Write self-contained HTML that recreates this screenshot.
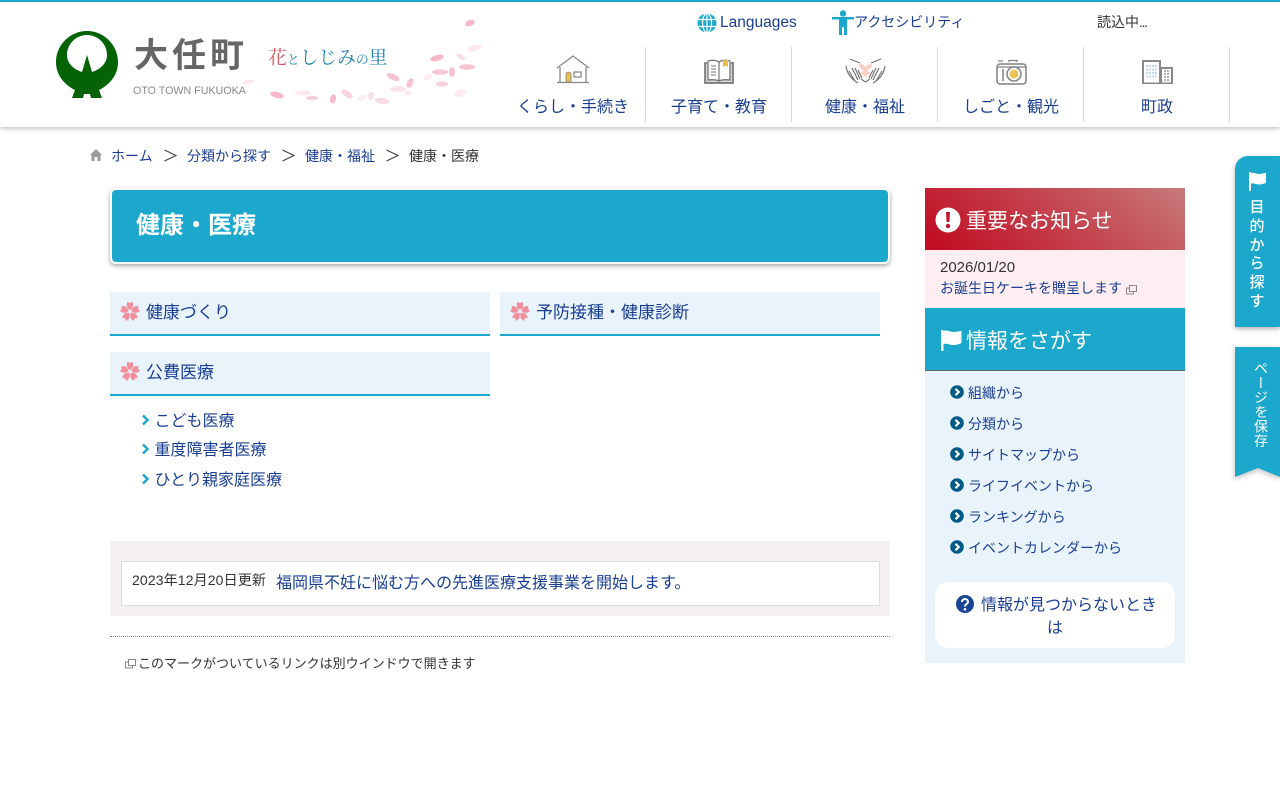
<!DOCTYPE html>
<html lang="ja"><head><meta charset="utf-8"><title>健康・医療</title>
<style>
html,body{margin:0;padding:0;background:#fff}
body{width:1280px;height:800px;overflow:hidden;position:relative;font-family:"Liberation Sans","Noto Sans CJK JP",sans-serif;color:#333;font-size:14px}
.a{position:absolute;white-space:nowrap;line-height:1}
.l{color:#1a3f92}
svg{position:absolute;display:block;overflow:visible}
.nav{color:#1a3f92;font-size:16px;width:146px;text-align:center;top:100px}
.sep{position:absolute;top:47px;width:1px;height:75px;background:#d8d8d8}
.h{position:absolute;background:#e8f3fc;border-bottom:2px solid #1ca8cd;height:42px;width:380px}
.h span{position:absolute;left:36px;top:11px;font-size:17px;line-height:20px;color:#1a3f92;white-space:nowrap}
.h svg{left:10px;top:9px}
.side{font-size:14px;color:#1a3f92;left:968px}
</style></head><body>
<svg width="0" height="0" style="position:absolute"><defs>
<path id="pt" d="M10 9C6.500 7 6 3.500 7.500 .8L10 2l2.500-1.200C14 3.500 13.500 7 10 9Z"/>
<g id="sakura" fill="#f0909c"><use href="#pt"/><use href="#pt" transform="rotate(72 10 10.500)"/><use href="#pt" transform="rotate(144 10 10.500)"/><use href="#pt" transform="rotate(216 10 10.500)"/><use href="#pt" transform="rotate(288 10 10.500)"/></g>
<g id="ext" fill="none" stroke="#888" stroke-width="1"><rect x="3.500" y=".5" width="7" height="6"/><path d="M3.500 3H.5v6h7V6.500"/></g>
<g id="bul"><circle cx="7" cy="7" r="6.800" fill="#005a87"/><path d="M5.500 3.800 8.700 7 5.500 10.200" fill="none" stroke="#fff" stroke-width="2.200"/></g>
</defs></svg>

<div style="position:absolute;left:0;top:0;width:1280px;height:127px;background:#fff;box-shadow:0 1px 5px rgba(0,0,0,.3)"></div>
<div style="position:absolute;left:0;top:0;width:1280px;height:2px;background:#1ca8cd"></div>

<!-- logo -->
<svg style="left:55px;top:30px" width="64" height="68" viewBox="0 0 64 68">
<path fill="#056305" d="M32 1C15 1 1 15 1 32C1 44 8 54 20 60L17 68H28L29 64H35L36 68H47L44 60C56 54 63 44 63 32C63 15 49 1 32 1Z"/>
<path fill="#fff" d="M32 5C21 5 12 14 12 25C12 33 18 39 27 42L32 25L37 42C46 39 52 33 52 25C52 14 43 5 32 5Z"/>
</svg>
<div class="a" style="left:134px;top:39px;font-size:34px;letter-spacing:4px;color:#666;font-weight:700">大任町</div>
<div class="a" style="left:133px;top:86px;font-size:10.700px;color:#8a8a8a">OTO TOWN FUKUOKA</div>
<div class="a" style="left:268px;top:50px;font-size:18.700px;color:#1f83b4;font-family:'Liberation Serif','Noto Serif CJK SC',serif"><span style="color:#d55a63">花</span><span style="font-size:13px">と</span>しじみ<span style="font-size:13px">の</span>里</div>
<svg style="left:0;top:0" width="500" height="127" fill="#f5b9c9">
<ellipse cx="470" cy="23" rx="5" ry="3" transform="rotate(-20 470 23)"/>
<ellipse cx="475" cy="48" rx="7" ry="3" transform="rotate(-15 475 48)" opacity=".35"/>
<ellipse cx="437" cy="58" rx="7" ry="3" transform="rotate(-15 437 58)"/>
<ellipse cx="461" cy="57" rx="5" ry="2.500" transform="rotate(35 461 57)" opacity=".45"/>
<ellipse cx="467" cy="67" rx="8" ry="2.800" opacity=".85"/>
<ellipse cx="440" cy="72" rx="8" ry="2.800" opacity=".8"/>
<ellipse cx="452" cy="72" rx="3" ry="5" opacity=".85"/>
<ellipse cx="428" cy="77" rx="5" ry="2.500" transform="rotate(-30 428 77)" opacity=".3"/>
<ellipse cx="442" cy="84" rx="6" ry="2.500" opacity=".7"/>
<ellipse cx="393" cy="77" rx="7" ry="3" transform="rotate(25 393 77)" opacity=".85"/>
<ellipse cx="410" cy="83" rx="5" ry="3" transform="rotate(-60 410 83)" opacity=".85"/>
<ellipse cx="398" cy="89" rx="8" ry="3" opacity=".4"/>
<ellipse cx="408" cy="93" rx="4" ry="2.500" opacity=".3"/>
<ellipse cx="460" cy="93" rx="6" ry="3.500" transform="rotate(-20 460 93)" opacity=".3"/>
<ellipse cx="248" cy="82" rx="6" ry="2" transform="rotate(-10 248 82)" opacity=".35"/>
<ellipse cx="277" cy="95" rx="7" ry="3" transform="rotate(15 277 95)"/>
<ellipse cx="303" cy="93" rx="8" ry="2.500" opacity=".35"/>
<ellipse cx="312" cy="98" rx="6" ry="2.200" opacity=".7"/>
<ellipse cx="333" cy="99" rx="3" ry="4.500" transform="rotate(15 333 99)"/>
<ellipse cx="347" cy="94" rx="6.500" ry="3" transform="rotate(35 347 94)" opacity=".6"/>
<ellipse cx="362" cy="98" rx="5" ry="2.500" transform="rotate(-25 362 98)" opacity=".25"/>
<ellipse cx="371" cy="96" rx="3" ry="4" transform="rotate(15 371 96)" opacity=".45"/>
<ellipse cx="382" cy="101" rx="7.500" ry="3" transform="rotate(10 382 101)" opacity=".5"/>
</svg>

<!-- top links -->
<svg style="left:697px;top:13px" width="20" height="20" viewBox="0 0 20 20"><circle cx="10" cy="10" r="9.500" fill="#1ca8cd"/><g fill="none" stroke="#fff" stroke-width="1.200"><ellipse cx="10" cy="10" rx="4.500" ry="9.500"/><path d="M10 0v20M1 6.500h18M1 13.500h18"/></g></svg>
<div class="a l" style="left:720px;top:15px;font-size:15.500px">Languages</div>
<svg style="left:832px;top:10px" width="22" height="26" viewBox="0 0 22 26" fill="#1ca8cd"><circle cx="11" cy="3.500" r="3.200"/><path d="M0 7h22v2.500h-7V25h-3v-8h-2v8H7V9.500H0Z"/></svg>
<div class="a l" style="left:854px;top:15px;font-size:14px">アクセシビリティ</div>
<div class="a" style="left:1097px;top:15px;font-size:14px;color:#333">読込中<span style="letter-spacing:-1.300px">...</span></div>

<!-- nav -->
<div class="sep" style="left:645px"></div><div class="sep" style="left:791px"></div><div class="sep" style="left:937px"></div><div class="sep" style="left:1083px"></div><div class="sep" style="left:1229px"></div>
<div class="a nav" style="left:500px">くらし・手続き</div>
<div class="a nav" style="left:646px">子育て・教育</div>
<div class="a nav" style="left:792px">健康・福祉</div>
<div class="a nav" style="left:938px">しごと・観光</div>
<div class="a nav" style="left:1084px">町政</div>
<svg style="left:556px;top:55px" width="34" height="29" viewBox="0 0 34 29" fill="none" stroke="#888" stroke-width="1.300"><path d="M1 13 17 1l16 12M4 12v15M30 12v15M1 27.500h32"/><path d="M10 27v-8c0-2.500 5-2.500 5 0v8Z" fill="#e8c050" stroke="#888" stroke-width=".8"/><path d="M18 17h7v5h-7Z"/></svg>
<svg style="left:704px;top:59px" width="30" height="26" viewBox="0 0 30 26" fill="none" stroke="#777" stroke-width="1.700"><path d="M3 4H1v20h28V4h-2" fill="#d8d8d8"/><path d="M4 2c4-1 8-1 11 1 3-2 7-2 11-1v19c-4-.5-8-.5-11 1-3-1.500-7-1.500-11-1Z" fill="#fff" stroke-width="1.300"/><path d="M15 3v19" stroke-width="1.200"/><path d="M7 7h5M7 10h5M7 13h5M7 16h5" stroke-width="1.100"/><path d="M19 1h5v7l-2.500-1.500L19 8Z" fill="#e8c050" stroke="none"/></svg>
<svg style="left:845px;top:59px" width="41" height="25" viewBox="0 0 41 25" fill="none" stroke="#777" stroke-width="1.200"><path d="M20.500 8c-2-3-6-4-7-2 0 2 4 5 7 7 3-2 7-5 7-7-1-2-5-1-7 2Z" fill="#f8d0c8" stroke="none"/><path d="M20.500 10l-5 4 5 4 5-4Z" fill="#f8d0c8" stroke="none"/><path d="M5 0l10 4M36 0 26 4M1 7c1 7 5 13 12 17M4 12l6 10M7 9l6 12M10 9l5 11M13 11l4 8M40 7c-1 7-5 13-12 17M37 12l-6 10M34 9l-6 12M31 9l-5 11M28 11l-4 8M16 20l4.500 3 4.500-3"/></svg>
<svg style="left:996px;top:59px" width="31" height="26" viewBox="0 0 31 26" fill="none" stroke="#808080" stroke-width="1.500"><rect x="1" y="5" width="29" height="20" rx="3"/><path d="M2 2h5M13 3V1.500h8V3M1 8h29" stroke-width="1.300"/><path d="M7 10v12"/><circle cx="18" cy="15" r="7" fill="#fff"/><circle cx="18" cy="15" r="4.500" fill="#e9c35a" stroke="none"/></svg>
<svg style="left:1142px;top:60px" width="31" height="25" viewBox="0 0 31 25"><path d="M0 0h19v24H0Z" fill="#888"/><path d="M2 2h15v20.500H2Z" fill="#fff"/><path d="M19 7h12v17H19Z" fill="#888"/><path d="M20 9h9v13.500h-9Z" fill="#fff"/><g fill="none" stroke="#c4d8f4" stroke-width="2" stroke-dasharray="2 1"><path d="M4 6h11M4 9.500h11M4 13h11M4 16.500h11"/></g><g fill="none" stroke="#999" stroke-width="1.500" stroke-dasharray="2 1"><path d="M22 11h6M22 14h6M22 17h6M22 20h6"/></g></svg>

<!-- breadcrumb -->
<svg style="left:90px;top:149px" width="12" height="12" viewBox="0 0 12 12" fill="#999"><path d="M6 0 12 6h-1.500v6H7.500V8h-3v4H1.500V6H0Z"/></svg>
<div class="a l" style="left:111px;top:149px">ホーム</div>
<svg style="left:164px;top:149px" width="13" height="13" fill="none" stroke="#444" stroke-width="1.100"><path d="M.5 1 12 6.500.5 12"/></svg>
<div class="a l" style="left:187px;top:149px">分類から探す</div>
<svg style="left:282px;top:149px" width="13" height="13" fill="none" stroke="#444" stroke-width="1.100"><path d="M.5 1 12 6.500.5 12"/></svg>
<div class="a l" style="left:305px;top:149px">健康・福祉</div>
<svg style="left:386px;top:149px" width="13" height="13" fill="none" stroke="#444" stroke-width="1.100"><path d="M.5 1 12 6.500.5 12"/></svg>
<div class="a" style="left:409px;top:149px">健康・医療</div>

<!-- title -->
<div style="position:absolute;left:110px;top:188px;width:776px;height:72px;background:#1ca8cd;border:2px solid #fff;border-radius:6px;box-shadow:0 2px 5px rgba(0,0,0,.35)"></div>
<div class="a" style="left:136px;top:214px;font-size:24px;font-weight:700;color:#fff">健康・医療</div>

<div class="h" style="left:110px;top:292px"><svg width="20" height="20"><use href="#sakura"/></svg><span>健康づくり</span></div>
<div class="h" style="left:500px;top:292px"><svg width="20" height="20"><use href="#sakura"/></svg><span>予防接種・健康診断</span></div>
<div class="h" style="left:110px;top:352px"><svg width="20" height="20"><use href="#sakura"/></svg><span>公費医療</span></div>

<svg style="left:142px;top:415px" width="7" height="10"><path d="M1 .5 5.500 5 1 9.500" fill="none" stroke="#1ca8cd" stroke-width="2.400"/></svg>
<svg style="left:142px;top:444px" width="7" height="10"><path d="M1 .5 5.500 5 1 9.500" fill="none" stroke="#1ca8cd" stroke-width="2.400"/></svg>
<svg style="left:142px;top:474px" width="7" height="10"><path d="M1 .5 5.500 5 1 9.500" fill="none" stroke="#1ca8cd" stroke-width="2.400"/></svg>
<div class="a l" style="left:154.500px;top:414px;font-size:16px">こども医療</div>
<div class="a l" style="left:154.500px;top:443px;font-size:16px">重度障害者医療</div>
<div class="a l" style="left:154.500px;top:473px;font-size:16px">ひとり親家庭医療</div>

<!-- update -->
<div style="position:absolute;left:110px;top:541px;width:780px;height:75px;background:#f3f0ef"></div>
<div style="position:absolute;left:121px;top:561px;width:757px;height:43px;background:#fff;border:1px solid #ddd"></div>
<div class="a" style="left:132px;top:573px;font-size:14px;letter-spacing:.13px">2023年12月20日更新</div>
<div class="a l" style="left:276px;top:576px;font-size:16px">福岡県不妊に悩む方への先進医療支援事業を開始します。</div>
<div style="position:absolute;left:110px;top:636px;width:780px;border-top:1px dotted #888"></div>
<svg style="left:125px;top:659px" width="11" height="10"><use href="#ext"/></svg>
<div class="a" style="left:138px;top:657px;font-size:13px">このマークがついているリンクは別ウインドウで開きます</div>

<!-- side -->
<div style="position:absolute;left:925px;top:188px;width:260px;height:62px;background:linear-gradient(40deg,#c10e23 5%,#c77a7a 100%)"></div>
<svg style="left:935px;top:207px" width="26" height="26" viewBox="0 0 26 26"><circle cx="13" cy="13" r="12.500" fill="#fff"/><path d="M11 5h4l-.6 10h-2.800Z" fill="#c1142a"/><circle cx="13" cy="19" r="2.200" fill="#c1142a"/></svg>
<div class="a" style="left:966px;top:211px;font-size:21px;color:#fff">重要なお知らせ</div>
<div style="position:absolute;left:925px;top:250px;width:260px;height:58px;background:#ffeef1"></div>
<div class="a" style="left:940px;top:260px;font-size:15px">2026/01/20</div>
<div class="a l" style="left:940px;top:281px;font-size:14px">お誕生日ケーキを贈呈します</div>
<svg style="left:1126px;top:285px" width="11" height="10"><use href="#ext"/></svg>

<div style="position:absolute;left:925px;top:308px;width:260px;height:62px;background:#1ca8cd;border-bottom:1px solid #666"></div>
<svg style="left:941px;top:330px" width="22" height="21" viewBox="0 0 22 21" fill="#fff"><path d="M0 0h2.500v21H0Z"/><path d="M2.500 1c4-1.500 6 1 10 1 3 0 6-1 8-1v12c-2 1-5 2-8 2-4 0-6-2-10-1Z"/></svg>
<div class="a" style="left:966px;top:331px;font-size:21px;color:#fff">情報をさがす</div>
<div style="position:absolute;left:925px;top:371px;width:260px;height:292px;background:#e8f3fc"></div>
<svg style="left:950px;top:385px" width="14" height="14"><use href="#bul"/></svg><div class="a side" style="top:386px">組織から</div>
<svg style="left:950px;top:416px" width="14" height="14"><use href="#bul"/></svg><div class="a side" style="top:417px">分類から</div>
<svg style="left:950px;top:447px" width="14" height="14"><use href="#bul"/></svg><div class="a side" style="top:448px">サイトマップから</div>
<svg style="left:950px;top:478px" width="14" height="14"><use href="#bul"/></svg><div class="a side" style="top:479px">ライフイベントから</div>
<svg style="left:950px;top:509px" width="14" height="14"><use href="#bul"/></svg><div class="a side" style="top:510px">ランキングから</div>
<svg style="left:950px;top:540px" width="14" height="14"><use href="#bul"/></svg><div class="a side" style="top:541px">イベントカレンダーから</div>
<div style="position:absolute;left:935px;top:582px;width:240px;height:66px;background:#fff;border-radius:13px"></div>
<svg style="left:956px;top:595px" width="18" height="18" viewBox="0 0 18 18"><circle cx="9" cy="9" r="9" fill="#1a4596"/><path d="M6 7c0-4 6-4 6 0 0 2-3 2-3 4.500" fill="none" stroke="#fff" stroke-width="2"/><circle cx="9" cy="14.300" r="1.300" fill="#fff"/></svg>
<div class="a l" style="left:981px;top:598px;font-size:16px">情報が見つからないとき</div>
<div class="a l" style="left:1047px;top:621px;font-size:16px">は</div>

<!-- float tabs -->
<div style="position:absolute;left:1235px;top:156px;width:45px;height:171px;background:#1ca8cd;border-radius:13px 0 0 0;box-shadow:0 2px 5px rgba(0,0,0,.3)"></div>
<svg style="left:1249px;top:172px" width="18" height="19" viewBox="0 0 18 19" fill="#fff"><path d="M0 0h2v19H0Z"/><path d="M2 1c3-1 5 1 8 1 2 0 5-1 7-1v10c-2 .5-5 1.500-7 1.500-3 0-5-1.500-8-1Z"/></svg>
<div style="position:absolute;left:1249px;top:199px;width:16px;font-size:15px;line-height:18.800px;color:#fff;text-align:center;font-weight:500">目<br>的<br>か<br>ら<br>探<br>す</div>
<svg style="left:1235px;top:347px;filter:drop-shadow(0 2px 3px rgba(0,0,0,.25))" width="45" height="131"><path d="M0 0h45v130l-22-9-23 9Z" fill="#1ca8cd"/></svg>
<div class="a" style="left:1253px;top:361px;font-size:14px;line-height:15px;color:#fff;writing-mode:vertical-rl;letter-spacing:.5px">ページを保存</div>
</body></html>
